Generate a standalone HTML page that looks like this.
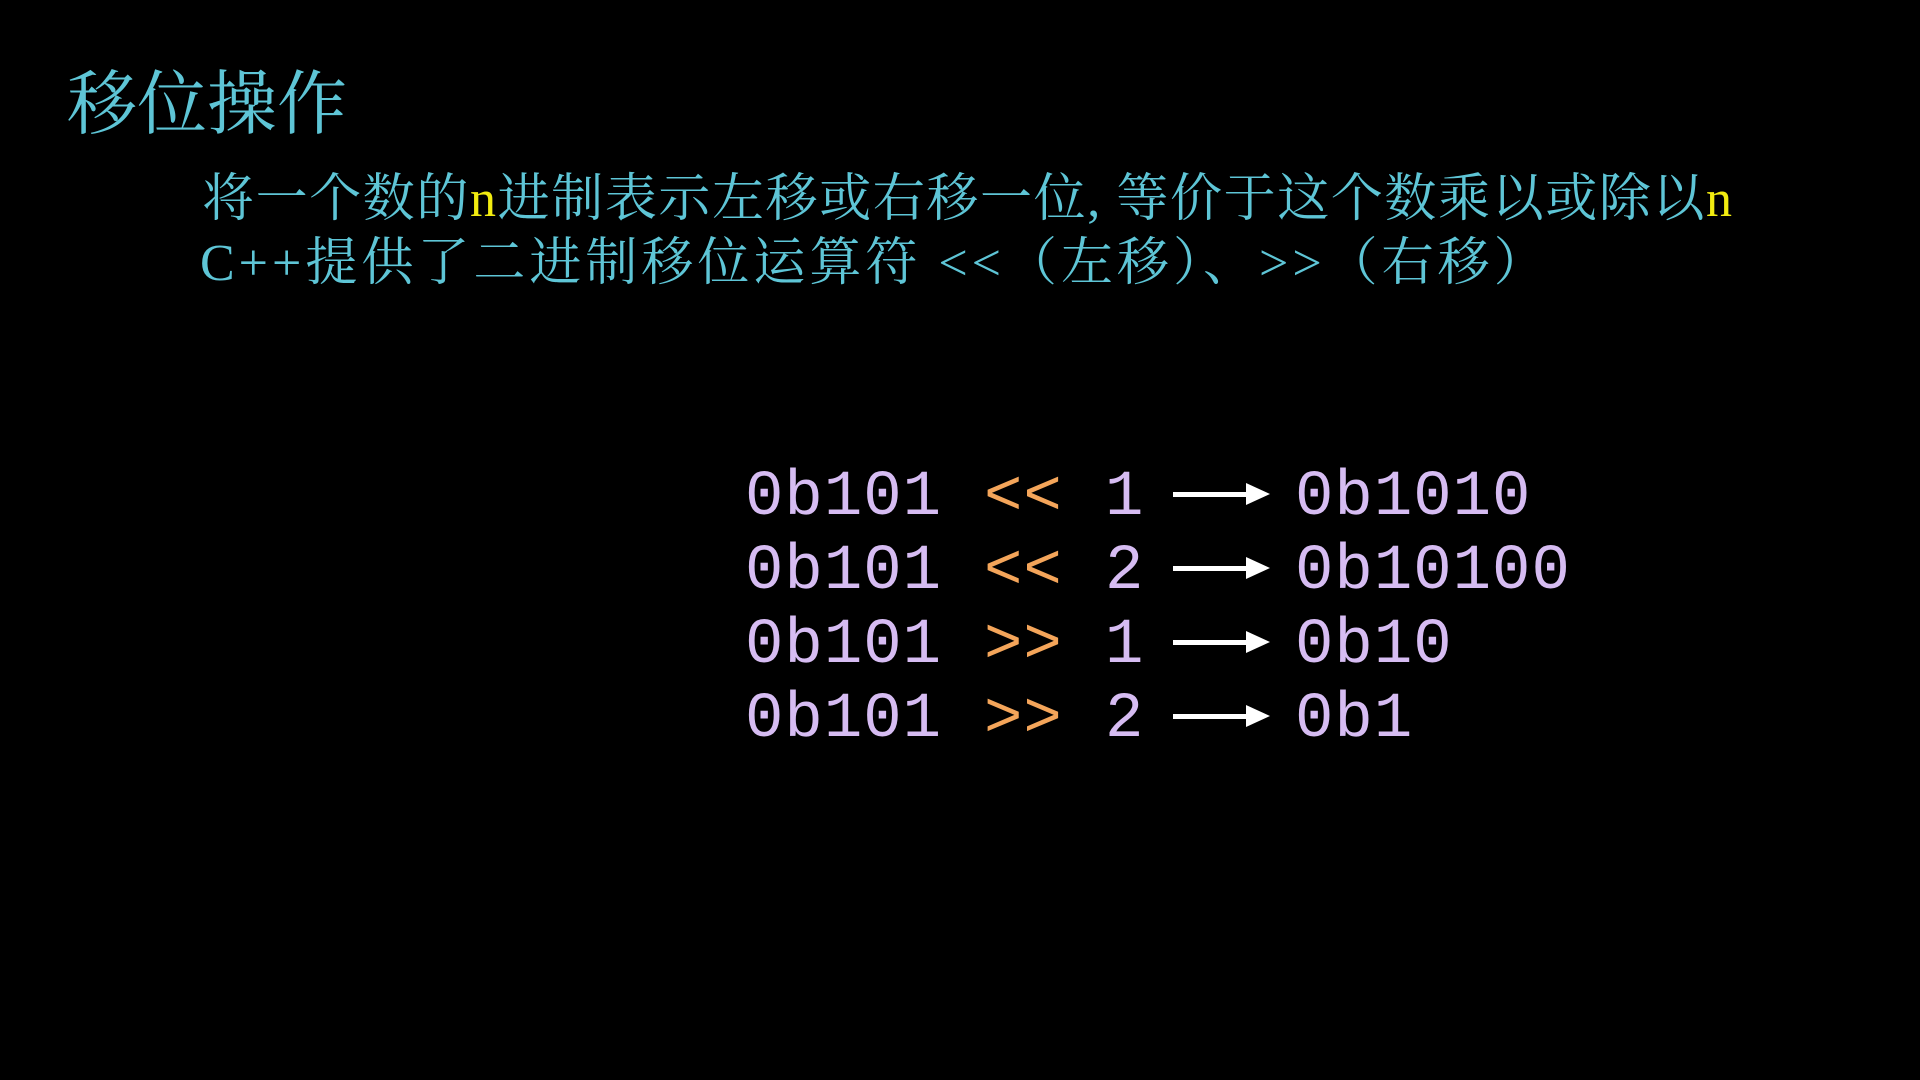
<!DOCTYPE html>
<html><head><meta charset="utf-8"><style>
html,body{margin:0;padding:0;background:#000;width:1920px;height:1080px;overflow:hidden}
.t{position:absolute;color:#5ec5d6;font-family:"Liberation Serif","Noto Serif CJK SC",serif;white-space:nowrap}
.y{color:#f2ec10}
.c{position:absolute;font-family:"Liberation Mono",monospace;font-size:64px;color:#d6bcf2;white-space:nowrap;line-height:1;letter-spacing:1px}
.o{color:#f4a55a}
.a{position:absolute;height:5px;background:#fff;width:75px;left:1173px}
.a::after{content:"";position:absolute;right:-22px;top:-9px;border-left:24px solid #fff;border-top:11px solid transparent;border-bottom:11px solid transparent}
</style></head><body>
<div class="t" style="left:67px;top:62px;font-size:70px;line-height:88px">移位操作</div>
<div class="t" style="left:202px;top:168px;font-size:52px;line-height:64px;letter-spacing:1.6px">将一个数的<span class="y">n</span>进制表示左移或右移一位, 等价于这个数乘以或除以<span class="y">n</span></div>
<div class="t" style="left:200px;top:232px;font-size:52px;line-height:64px;letter-spacing:4px">C++提供了二进制移位运算符 &lt;&lt;（左移）、&gt;&gt;（右移）</div>

<div class="c" style="left:745px;top:466px">0b101</div><div class="c o" style="left:984px;top:466px">&lt;&lt;</div><div class="c" style="left:1105px;top:466px">1</div>
<div class="a" style="top:492px"></div>
<div class="c" style="left:1295px;top:466px">0b1010</div>

<div class="c" style="left:745px;top:540px">0b101</div><div class="c o" style="left:984px;top:540px">&lt;&lt;</div><div class="c" style="left:1105px;top:540px">2</div>
<div class="a" style="top:566px"></div>
<div class="c" style="left:1295px;top:540px">0b10100</div>

<div class="c" style="left:745px;top:614px">0b101</div><div class="c o" style="left:984px;top:614px">&gt;&gt;</div><div class="c" style="left:1105px;top:614px">1</div>
<div class="a" style="top:640px"></div>
<div class="c" style="left:1295px;top:614px">0b10</div>

<div class="c" style="left:745px;top:688px">0b101</div><div class="c o" style="left:984px;top:688px">&gt;&gt;</div><div class="c" style="left:1105px;top:688px">2</div>
<div class="a" style="top:714px"></div>
<div class="c" style="left:1295px;top:688px">0b1</div>
</body></html>
